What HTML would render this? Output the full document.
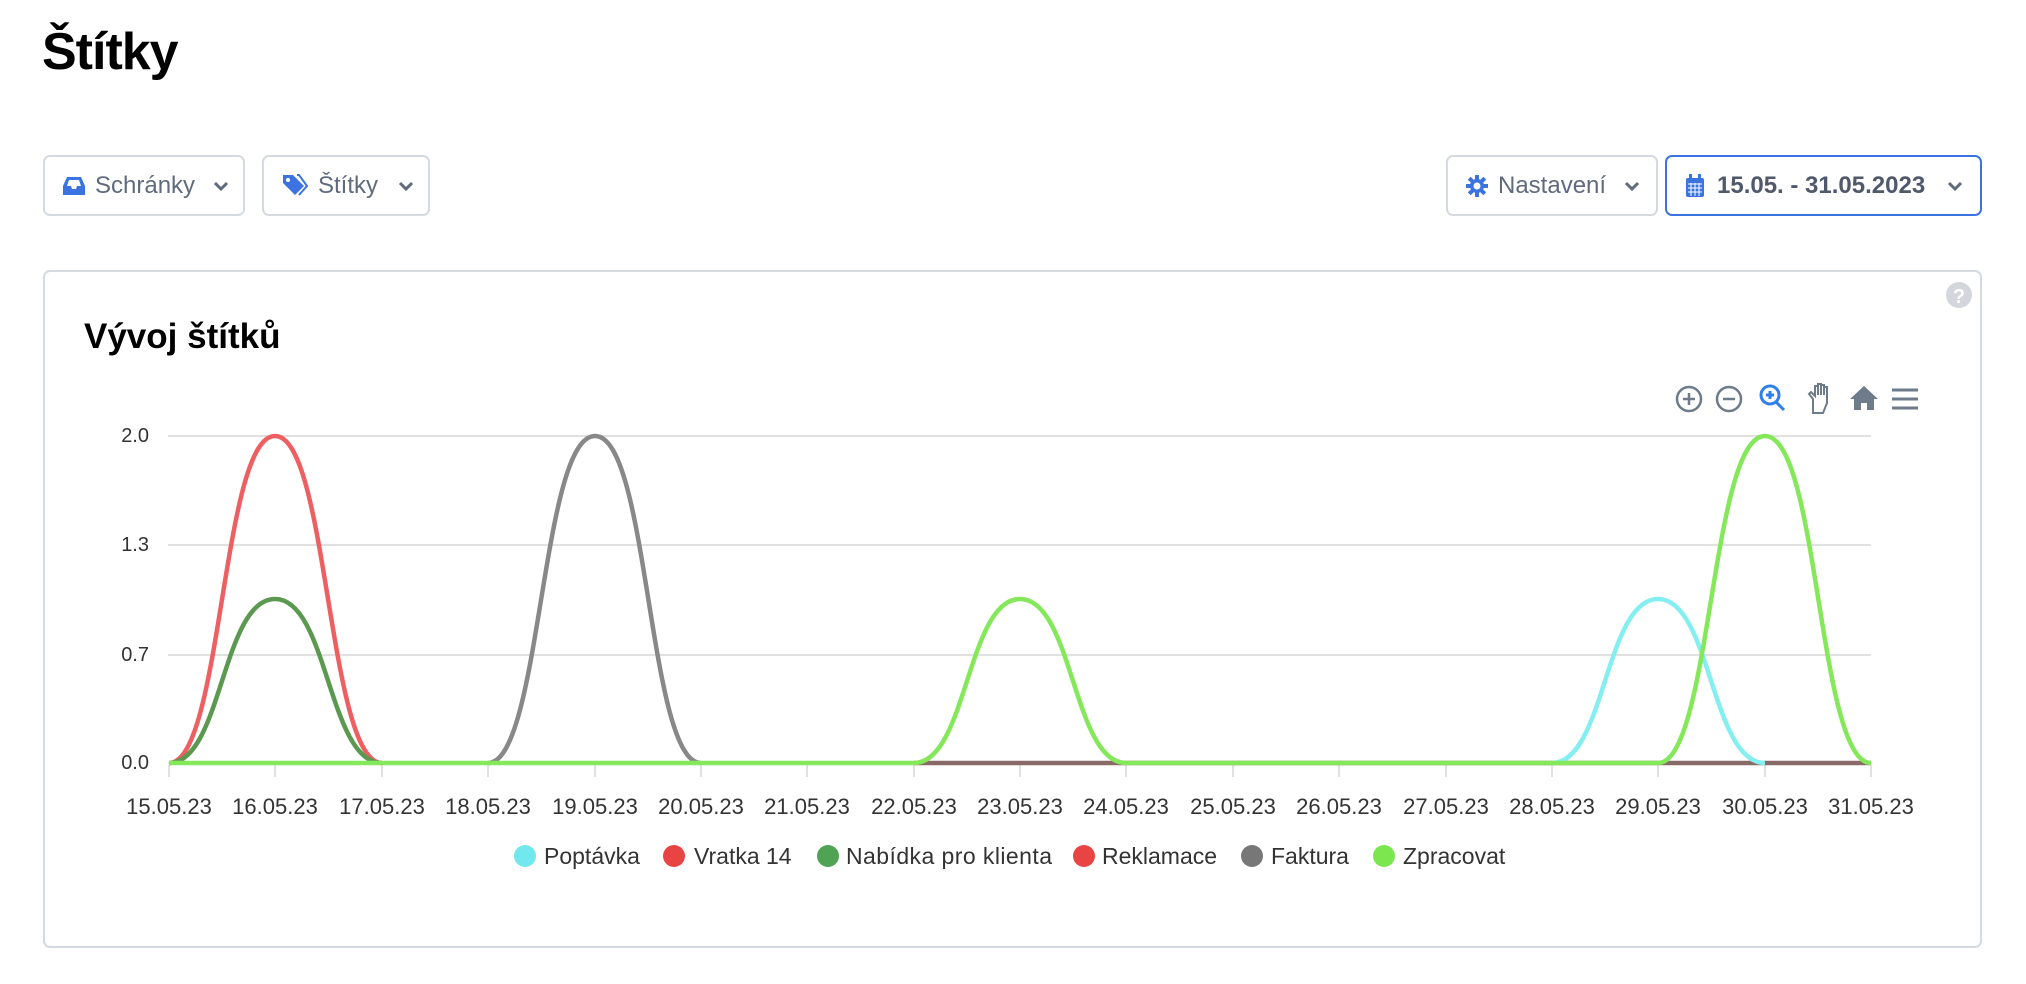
<!DOCTYPE html>
<html><head><meta charset="utf-8"><style>
*{margin:0;padding:0;box-sizing:border-box}
body{width:2026px;height:984px;background:#fff;font-family:"Liberation Sans",sans-serif;position:relative;overflow:hidden}
h1{position:absolute;left:42px;top:22px;font-size:52px;font-weight:bold;color:#000;letter-spacing:-1px}
.btn{position:absolute;top:155px;height:61px;border:2px solid #d5d9e0;border-radius:7px;display:flex;align-items:center;padding-left:18px;font-size:24px;color:#5f6b7d}
.btn svg{flex:none}
.card{position:absolute;left:43px;top:270px;width:1939px;height:678px;border:2px solid #d5d9e0;border-radius:7px}
</style></head><body>
<h1>Štítky</h1>
<div class="btn" style="left:43px;width:202px">
<svg width="22" height="20" viewBox="0 0 22 20"><path d="M4 1h14l4 9v9H0v-9z" fill="#3b74e0"/><path d="M4 10h4l1 3h4l1-3h4L16 4H6z" fill="#fff"/></svg>
<span style="margin-left:10px">Schránky</span>
<svg style="margin-left:18px" width="16" height="12" viewBox="0 0 16 12"><path d="M2 3l6 6 6-6" stroke="#5f6b7d" stroke-width="3" fill="none"/></svg></div>
<div class="btn" style="left:262px;width:168px">
<svg width="26" height="24" viewBox="0 0 26 24"><path d="M1 1h10l11 11-9 9L1 9z" fill="#3b74e0"/><circle cx="6" cy="6" r="2" fill="#fff"/><path d="M15 1h2l8 11-8 9" stroke="#3b74e0" stroke-width="2" fill="none"/></svg>
<span style="margin-left:10px">Štítky</span>
<svg style="margin-left:20px" width="16" height="12" viewBox="0 0 16 12"><path d="M2 3l6 6 6-6" stroke="#5f6b7d" stroke-width="3" fill="none"/></svg></div>
<div class="btn" style="left:1446px;width:212px">
<svg width="22" height="22" viewBox="0 0 22 22"><g fill="#3b74e0"><circle cx="11" cy="11" r="7"/><rect x="9" y="0" width="4" height="22"/><rect x="0" y="9" width="22" height="4"/><rect x="9" y="0" width="4" height="22" transform="rotate(45 11 11)"/><rect x="9" y="0" width="4" height="22" transform="rotate(-45 11 11)"/></g><circle cx="11" cy="11" r="3.5" fill="#fff"/></svg>
<span style="margin-left:10px">Nastavení</span>
<svg style="margin-left:18px" width="16" height="12" viewBox="0 0 16 12"><path d="M2 3l6 6 6-6" stroke="#5f6b7d" stroke-width="3" fill="none"/></svg></div>
<div class="btn" style="left:1665px;width:317px;border-color:#3b74e0;color:#4f596a;font-weight:bold">
<svg width="20" height="24" viewBox="0 0 20 24"><rect x="1" y="4" width="18" height="19" rx="2" fill="#3b74e0"/><rect x="4" y="0" width="3" height="6" fill="#3b74e0"/><rect x="13" y="0" width="3" height="6" fill="#3b74e0"/><path d="M3 10h14M3 14h14M3 18h14M6 9v13M10 9v13M14 9v13" stroke="#fff" stroke-width="1"/></svg>
<span style="margin-left:12px">15.05. - 31.05.2023</span>
<svg style="margin-left:22px" width="16" height="12" viewBox="0 0 16 12"><path d="M2 3l6 6 6-6" stroke="#5f6b7d" stroke-width="3" fill="none"/></svg></div>
<div class="card"></div>
<svg style="position:absolute;left:0;top:0" width="2026" height="984">
<text x="84" y="348" font-size="35" font-weight="bold" fill="#000" font-family="Liberation Sans">Vývoj štítků</text>
<circle cx="1959" cy="295" r="13" fill="#d3d7dd"/><text x="1959" y="303" font-size="20" font-weight="bold" fill="#fff" text-anchor="middle" font-family="Liberation Sans">?</text>
<g stroke="#6e7b8b" stroke-width="2.5" fill="none">
<circle cx="1689" cy="399" r="12"/><path d="M1683 399h12M1689 393v12"/>
<circle cx="1729" cy="399" r="12"/><path d="M1723 399h12"/>
<path d="M1813 413v-14l-4-5 2-2 4 4v-10h3v9-11h3v11-10h3v10-8h3v16l-4 10h-10z" stroke-width="2"/>
<path d="M1892 390h26M1892 399h26M1892 408h26" stroke-width="3"/>
</g>
<g stroke="#2f80ed" stroke-width="3" fill="none"><circle cx="1770" cy="395" r="9"/><path d="M1776 402l8 8M1766 395h8M1770 391v8" stroke-width="3"/></g>
<path d="M1864 386l-14 13h4v11h7v-7h6v7h7v-11h4z" fill="#6e7b8b"/>
<g stroke="#e1e1e1" stroke-width="2"><path d="M168 436H1871M168 545H1871M168 655H1871M168 763H1871"/></g>
<g font-size="20" fill="#333" text-anchor="end" font-family="Liberation Sans"><text x="149" y="442">2.0</text><text x="149" y="551">1.3</text><text x="149" y="661">0.7</text><text x="149" y="769">0.0</text></g>
<g stroke="#e1e1e1" stroke-width="2">
<path d="M169 765v12M275 765v12M382 765v12M488 765v12M595 765v12M701 765v12M807 765v12M914 765v12M1020 765v12M1126 765v12M1233 765v12M1339 765v12M1446 765v12M1552 765v12M1658 765v12M1765 765v12M1871 765v12"/></g>
<g font-size="22" fill="#333" text-anchor="middle" font-family="Liberation Sans">
<text x="169" y="814">15.05.23</text><text x="275" y="814">16.05.23</text><text x="382" y="814">17.05.23</text><text x="488" y="814">18.05.23</text><text x="595" y="814">19.05.23</text><text x="701" y="814">20.05.23</text><text x="807" y="814">21.05.23</text><text x="914" y="814">22.05.23</text><text x="1020" y="814">23.05.23</text><text x="1126" y="814">24.05.23</text><text x="1233" y="814">25.05.23</text><text x="1339" y="814">26.05.23</text><text x="1446" y="814">27.05.23</text><text x="1552" y="814">28.05.23</text><text x="1658" y="814">29.05.23</text><text x="1765" y="814">30.05.23</text><text x="1871" y="814">31.05.23</text></g>
<g fill="none" stroke-width="4.5" stroke-linejoin="round">
<path d="M914 763H1871" stroke="#8a6a66"/>
<path d="M169 763C222 763 222 436 275 436S328 763 382 763" stroke="#ee5f62"/>
<path d="M169 763C222 763 222 599 275 599S328 763 382 763" stroke="#5c9950"/>
<path d="M488 763C541 763 541 436 595 436S648 763 701 763" stroke="#888"/>
<path d="M1552 763C1605 763 1605 599 1658 599S1711 763 1765 763" stroke="#84eef0"/>
<path d="M169 763H914C967 763 967 599 1020 599S1073 763 1126 763H1658C1711 763 1711 436 1765 436S1818 763 1871 763" stroke="#84e85a"/>
</g>
<g font-size="23" fill="#333" font-family="Liberation Sans">
<circle cx="525" cy="856" r="11" fill="#70e8ee"/><text x="544" y="864">Poptávka</text>
<circle cx="674" cy="856" r="11" fill="#e84444"/><text x="694" y="864">Vratka 14</text>
<circle cx="828" cy="856" r="11" fill="#4fa352"/><text x="846" y="864" textLength="206">Nabídka pro klienta</text>
<circle cx="1084" cy="856" r="11" fill="#e84444"/><text x="1102" y="864">Reklamace</text>
<circle cx="1252" cy="856" r="11" fill="#777"/><text x="1271" y="864">Faktura</text>
<circle cx="1384" cy="856" r="11" fill="#7be650"/><text x="1403" y="864">Zpracovat</text>
</g>
</svg>
</body></html>
